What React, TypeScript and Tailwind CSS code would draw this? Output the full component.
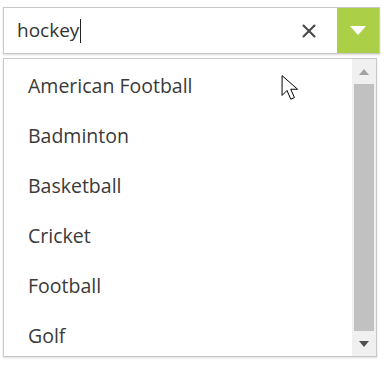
import { X } from "lucide-react";

const sports = ["American Football", "Badminton", "Basketball", "Cricket", "Football", "Golf"];

export default function App() {
  return (
    <div className="relative h-[365px] w-[386px] bg-white" style={{ fontFamily: '"Open Sans", "Noto Sans", sans-serif' }}>
      <div className="absolute left-[3px] top-[7px] flex h-[47px] w-[377px] border border-[#c8c8c8] shadow-[0_1px_2px_rgba(0,0,0,0.15)]">
        <div className="flex flex-1 items-center pl-[13px] text-[19px] text-[#333]">
          hockey<span className="ml-px h-[24px] w-px bg-[#222]" />
        </div>
        <div className="flex w-[56px] items-center justify-center text-[#4a4a4a]">
          <X size={22} strokeWidth={2.3} />
        </div>
        <div className="flex w-[42px] items-center justify-center bg-[#abcf47]">
          <svg width="16" height="9" viewBox="0 0 16 9">
            <path d="M0 0h16L8 9z" fill="#fff" />
          </svg>
        </div>
      </div>

      <div className="absolute left-[3px] top-[58px] flex h-[299px] w-[374px] border border-[#c8c8c8] shadow-[0_1px_2px_rgba(0,0,0,0.15)]">
        <ul className="flex-1 pt-[2px] text-[19.5px] text-[#3a3a3a]">
          {sports.map((s) => (
            <li key={s} className="flex h-[50px] items-center pl-[24px]">
              {s}
            </li>
          ))}
        </ul>
        <div className="flex w-[24px] flex-col items-center bg-[#f0f0f0]">
          <div className="flex h-[25px] items-center justify-center">
            <svg width="10" height="6" viewBox="0 0 10 6"><path d="M0 6h10L5 0z" fill="#a3a3a3" /></svg>
          </div>
          <div className="w-[20px] flex-1 bg-[#c1c1c1]" />
          <div className="flex h-[25px] items-center justify-center">
            <svg width="10" height="6" viewBox="0 0 10 6"><path d="M0 0h10L5 6z" fill="#505050" /></svg>
          </div>
        </div>
      </div>

      <svg className="absolute left-[281px] top-[75px]" width="17" height="26" viewBox="0 0 13 21">
        <path d="M0.5 0.5v16l4-4 3 7 3-1.3-3-6.7h5.5z" fill="#fff" stroke="#000" strokeWidth="0.8" strokeLinejoin="miter" />
      </svg>
    </div>
  );
}
